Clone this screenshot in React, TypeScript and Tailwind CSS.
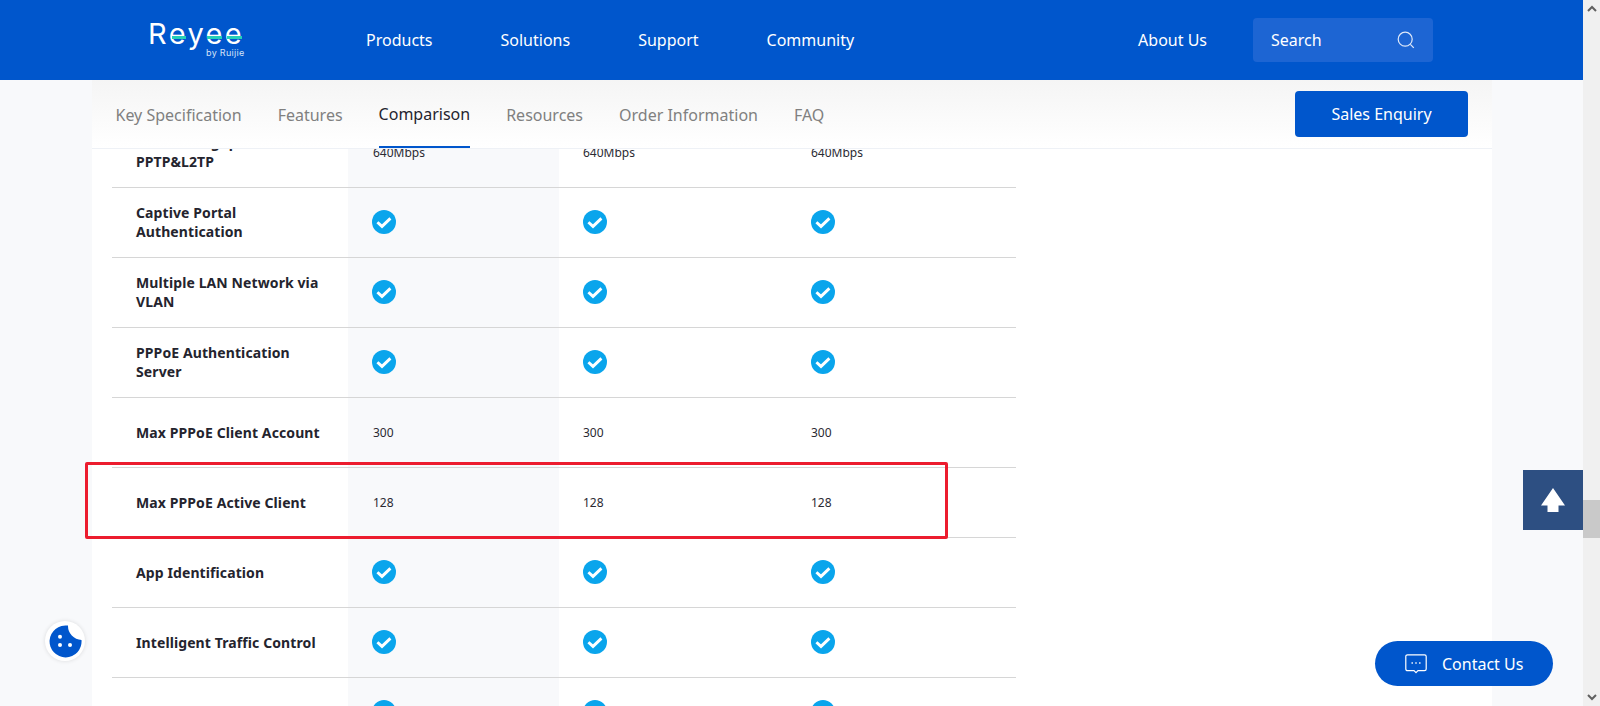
const ROWS = [
  { label: "Captive Portal Authentication" },
  { label: "Multiple LAN Network via VLAN" },
  { label: "PPPoE Authentication Server" },
  { label: "Max PPPoE Client Account", value: "300" },
  { label: "Max PPPoE Active Client", value: "128" },
  { label: "App Identification" },
  { label: "Intelligent Traffic Control" },
];

function Check() {
  return (
    <svg width="24" height="24" viewBox="0 0 24 24" className="block -mt-px">
      <circle cx="12" cy="12" r="12" fill="#0aa5ec" />
      <path d="M5.4 12.2l4.6 4.2 8.4-8" fill="none" stroke="#fff" strokeWidth="2.9" />
    </svg>
  );
}

function Row({ label, value }: { label: string; value?: string }) {
  const cell = value ? <span className="text-xs text-[#2a2a33]">{value}</span> : <Check />;
  return (
    <div className="grid grid-cols-[236px_211px_228px_229px] h-[70px] border-b border-[#d6d6d6] box-border">
      <div className="flex items-center pl-6 pr-[22px] pb-px text-sm leading-[19px] tracking-[0.1px] font-bold text-[#24242e]">{label}</div>
      <div className={value ? "flex items-center pl-[25px] bg-[#f8f9fb]" : "flex items-center pl-6 bg-[#f8f9fb]"}>{cell}</div>
      <div className="flex items-center pl-6">{cell}</div>
      <div className="flex items-center pl-6">{cell}</div>
    </div>
  );
}

function Logo() {
  return (
    <div className="w-[216px] shrink-0 relative h-[40px]">
      <span className="absolute left-[-2px] top-0 font-['Inter'] font-normal text-[29px] leading-[28px] tracking-[2.4px] text-white">Reyee</span>
      <span className="absolute left-[22px] top-[16px] w-[14px] h-[3px] bg-[#25d0b8]" />
      <span className="absolute left-[57px] top-[16px] w-[15px] h-[3px] bg-[#25d0b8]" />
      <span className="absolute left-[77px] top-[16px] w-[15px] h-[3px] bg-[#25d0b8]" />
      <span className="absolute left-[56px] top-[29px] font-['Inter'] text-[9px] leading-[8px] tracking-[0.3px] text-[#d5e3f7] whitespace-nowrap">by Ruijie</span>
    </div>
  );
}

export default function App() {
  return (
    <div className="relative flex h-[706px] overflow-hidden bg-[#f8f9fb] font-['Noto_Sans',sans-serif]">
      <div className="flex-1 min-w-0 flex flex-col">
        <header className="h-20 shrink-0 bg-[#0056cc] flex items-center pl-[150px] pr-[150px] text-base text-white">
          <Logo />
          <nav className="flex gap-[68px]">
            <a>Products</a>
            <a>Solutions</a>
            <a>Support</a>
            <a>Community</a>
          </nav>
          <a className="ml-auto">About Us</a>
          <div className="ml-[46px] w-[180px] h-[44px] rounded bg-[#1d65d3] flex items-center justify-between pl-[18px] pr-[18px]">
            <span>Search</span>
            <svg width="18" height="18" viewBox="0 0 18 18" fill="none" stroke="#dfe9f9" strokeWidth="1.2">
              <circle cx="8.2" cy="8.2" r="7" />
              <path d="M13.4 13.4l3.4 3.4" />
            </svg>
          </div>
        </header>

        <div className="ml-[92px] w-[1400px] flex-1 min-h-0 bg-white flex flex-col">
          <div className="h-[69px] shrink-0 relative z-10 flex items-center pl-[23.5px] pr-6 border-b border-[#eef1f6] bg-gradient-to-b from-[#f5f5f5] to-white text-base text-[#808080]">
            <nav className="flex gap-9 h-full">
              <a className="flex items-center pt-[2px]">Key Specification</a>
              <a className="flex items-center pt-[2px]">Features</a>
              <a className="flex items-center pt-[2px] text-[#24242e] border-b-2 border-[#0056cc] h-[68px]">Comparison</a>
              <a className="flex items-center pt-[2px]">Resources</a>
              <a className="flex items-center pt-[2px]">Order Information</a>
              <a className="flex items-center pt-[2px]">FAQ</a>
            </nav>
            <button className="ml-auto w-[173px] h-[46px] rounded bg-[#0056cc] text-white">Sales Enquiry</button>
          </div>

          <div className="flex-1 min-h-0 overflow-hidden">
            <div className="ml-5 w-[904px] mt-[-31px]">
              <Row label="VPN Throughput PPTP&L2TP" value="640Mbps" />
              {ROWS.map((r) => (
                <Row key={r.label} label={r.label} value={r.value} />
              ))}
              <Row label="" />
            </div>
          </div>
        </div>
      </div>

      <div className="w-[17px] shrink-0 bg-[#f0f0f0] flex flex-col items-center justify-between py-[5px] relative">
        <svg width="10" height="7" viewBox="0 0 10 7" fill="none" stroke="#606060" strokeWidth="2"><path d="M1 6l4-4 4 4" /></svg>
        <span className="absolute left-0 top-[500px] w-full h-[38px] bg-[#c9c9c9]" />
        <svg width="10" height="7" viewBox="0 0 10 7" fill="none" stroke="#606060" strokeWidth="2"><path d="M1 1l4 4 4-4" /></svg>
      </div>

      {/* floating stuff */}
      <div className="absolute left-[85px] top-[462px] w-[863px] h-[77px] border-[3px] border-[#ec1c2e] rounded-[2px]" />

      <div className="absolute left-[1523px] top-[470px] w-[60px] h-[60px] bg-[#2d4f82] flex items-center justify-center">
        <svg width="24" height="24" viewBox="0 0 24 24"><path d="M12 0L24 17.5H17.5V24H6.5V17.5H0Z" fill="#fff" /></svg>
      </div>

      <div className="absolute left-[45px] top-[621px] w-10 h-10 rounded-full bg-white shadow-[0_0_4px_rgba(0,0,0,0.12)] flex items-center justify-center">
        <svg width="33" height="33" viewBox="0 0 33 33">
          <path d="M19 .6A16 16 0 1 0 32.5 15 14 14 0 0 1 19 .6Z" fill="#0056cc" />
          <circle cx="11" cy="11.7" r="2" fill="#fff" />
          <circle cx="11" cy="20" r="2" fill="#fff" />
          <circle cx="21" cy="20" r="2" fill="#fff" />
        </svg>
      </div>

      <div className="absolute left-[1375px] top-[641px] w-[178px] h-[45px] rounded-full bg-[#0056cc] flex items-center pl-[30px] text-base text-white">
        <svg width="22" height="20" viewBox="0 0 22 20" fill="none" stroke="#fff" strokeWidth="1.2">
          <path d="M2.5 .8h17a1.7 1.7 0 0 1 1.7 1.7v12.5a1.7 1.7 0 0 1-1.7 1.7h-6.5l-2 2-2-2h-6.5A1.7 1.7 0 0 1 .8 15V2.5A1.7 1.7 0 0 1 2.5 .8Z" />
          <path d="M6.5 9h1.4M10.3 9h1.4M14.1 9h1.4" strokeWidth="1.6" />
        </svg>
        <span className="ml-[15px]">Contact Us</span>
      </div>
    </div>
  );
}
